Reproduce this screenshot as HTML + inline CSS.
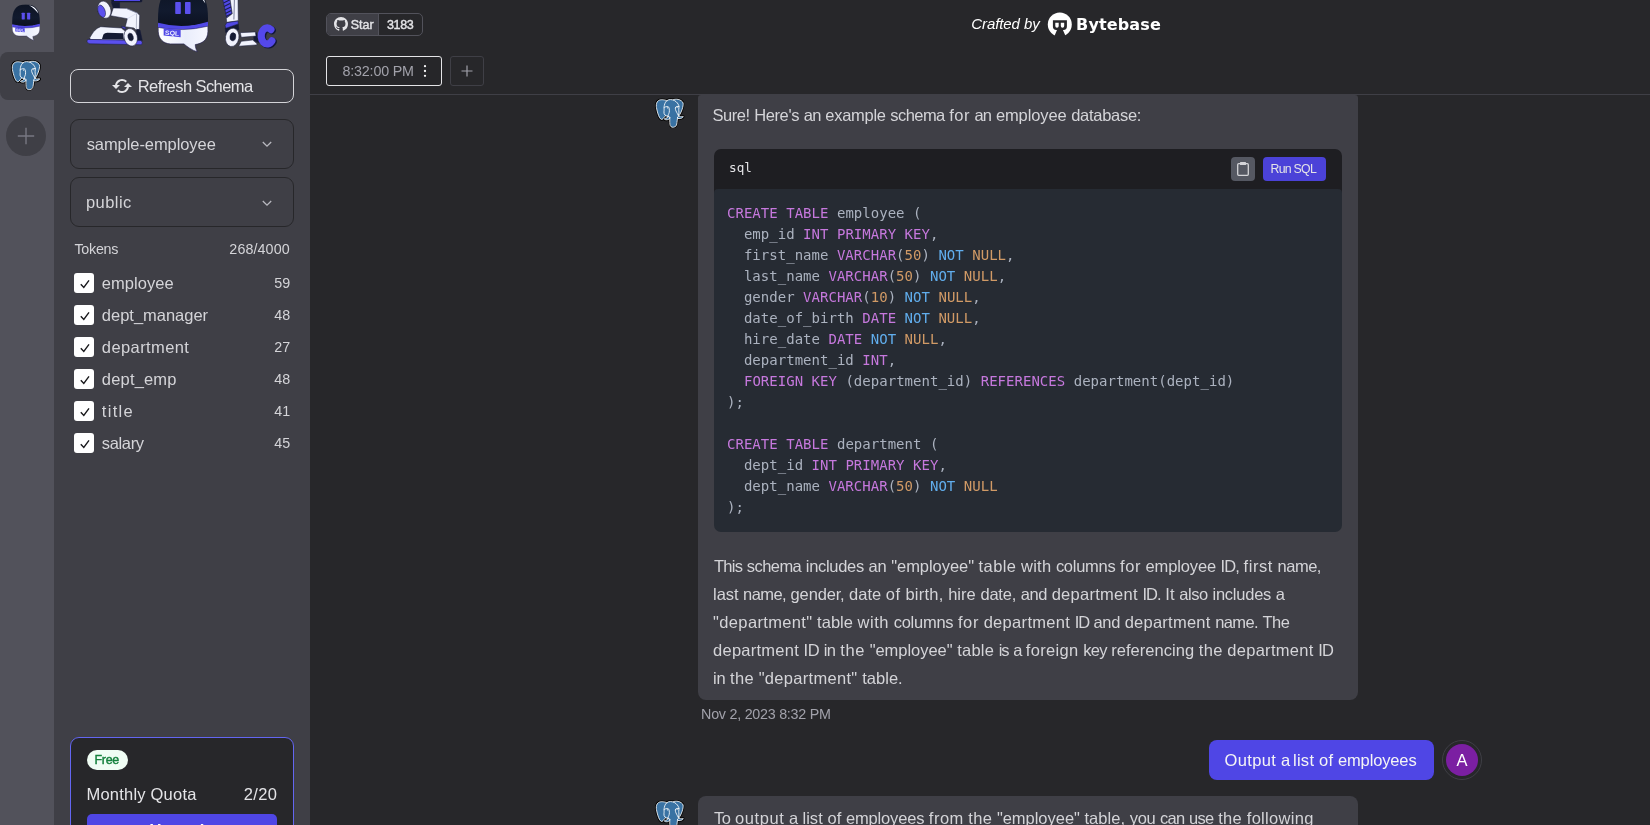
<!DOCTYPE html>
<html lang="en">
<head>
<meta charset="utf-8">
<title>SQL Chat</title>
<style>
*{box-sizing:border-box;margin:0;padding:0}
html,body{width:1650px;height:825px;overflow:hidden;background:#27272a;}
body{position:relative;font-family:"Liberation Sans",sans-serif;color:#d4d4d8;font-size:16px;}
#root{position:absolute;left:0;top:0;width:1650px;height:825px;will-change:transform}
.abs{position:absolute}
.t{position:absolute;white-space:nowrap;line-height:1;color:#d4d4d8}
#rail{position:absolute;left:0;top:0;width:54px;height:825px;background:#52525b}
#railsel{position:absolute;left:0;top:52px;width:54px;height:48px;background:#3f3f46;border-radius:8px 0 0 8px}
#railplus{position:absolute;left:6px;top:116px;width:40px;height:40px;border-radius:50%;background:#3f3f46}
#side{position:absolute;left:54px;top:0;width:256px;height:825px;background:#3f3f46}
#refreshb{position:absolute;left:70px;top:69px;width:224px;height:34px;border:1px solid #d4d4d8;border-radius:8px}
.sel{position:absolute;left:70px;width:224px;height:50px;border:1px solid #27272a;border-radius:9px}
.cb{position:absolute;left:74px;width:20px;height:20px;background:#fff;border-radius:3px}
#quota{position:absolute;left:70px;top:737px;width:224px;height:120px;border:1px solid #6366f1;border-radius:9px;background:#27272a}
#hline{position:absolute;left:310px;top:94px;width:1340px;height:1px;background:#3f3f46}
.bubble{position:absolute;left:698px;width:660px;background:#3f3f46}
#codeh{position:absolute;left:714px;top:149px;width:628px;height:60px;background:#1e1e22;border-radius:7px 7px 0 0}
#codeb{position:absolute;left:714px;top:189px;width:628px;height:343px;background:#262b33;border-radius:4px 4px 7px 7px}
pre{position:absolute;left:727px;top:203.2px;font-family:"DejaVu Sans Mono","Liberation Mono",monospace;font-size:14px;line-height:21px;color:#abb2bf;white-space:pre;letter-spacing:0.025px}
.k{color:#c678dd}.n{color:#d19a66}.b{color:#61aeee}
</style>
</head>
<body>
<div id="root">
<svg width="0" height="0" style="position:absolute">
<defs>
<linearGradient id="gDome" x1="0" y1="0" x2="0" y2="1"><stop offset="0" stop-color="#0d1424"/><stop offset="0.6" stop-color="#111a2e"/><stop offset="1" stop-color="#0b1120"/></linearGradient>
<linearGradient id="gBody" x1="0" y1="0" x2="1" y2="0"><stop offset="0" stop-color="#ffffff"/><stop offset="0.55" stop-color="#e9edfb"/><stop offset="1" stop-color="#f7f8ff"/></linearGradient>
<symbol id="bot" viewBox="0 0 28 36.6">
<path d="M0.2,20.5 L0.3,25 C0.5,29 3,31.6 7,31.8 L14.5,31.8 C16.5,33.5 19,35.3 21.9,36.2 C21.2,34.8 20.8,33.5 20.8,32.2 C24.5,31.5 27.6,30 27.8,25 L27.8,20.5 Z" fill="url(#gBody)" stroke="#1e1b4b" stroke-width="0.35"/>
<path d="M0.2,20.6 C-0.2,7 2.5,0.3 13.8,0.3 C25.3,0.3 28.2,7 27.8,20 Q14,24.2 0.2,20.6 Z" fill="url(#gDome)"/>
<path d="M0.2,20.1 Q14,23.9 27.8,19.5 L27.8,22 Q14,25.4 0.2,22.7 Z" fill="#5048e5"/>
<path d="M0.2,22.7 Q14,25.4 27.8,22" fill="none" stroke="#1e1b4b" stroke-width="0.3"/>
<rect x="9.7" y="8.6" width="3.1" height="6.6" rx="0.4" fill="#5b50ee"/>
<rect x="15.1" y="8.6" width="3.1" height="6.6" rx="0.4" fill="#5b50ee"/>
<path d="M3.3,23.2 L12.7,24 L12.7,28.1 L3.3,27.2 Z" fill="#5048e5"/>
<text x="3.9" y="26.7" font-family="Liberation Sans, sans-serif" font-weight="bold" font-size="3.5" fill="#e8eaff" transform="rotate(5 4 26.7)" textLength="8" lengthAdjust="spacingAndGlyphs">SQL</text>
<path d="M17,1 C21.8,1.8 25.2,5 26.4,9.4 C23.8,5.8 21,3.2 17,1 Z" fill="#f4f6ff"/>
</symbol>
<symbol id="pg" viewBox="0 0 432.071 445.383">
<g style="fill-rule:nonzero;clip-rule:nonzero;fill:none;stroke:#FFFFFF;stroke-width:12.4651;stroke-linecap:round;stroke-linejoin:round;stroke-miterlimit:4;">
<path style="fill:#000000;stroke:#000000;stroke-width:37.3953;stroke-linecap:butt;stroke-linejoin:miter;" d="M323.205,324.227c2.833-23.601,1.984-27.062,19.563-23.239l4.463,0.392c13.517,0.615,31.199-2.174,41.587-7c22.362-10.376,35.622-27.7,13.572-23.148c-50.297,10.376-53.755-6.655-53.755-6.655c53.111-78.803,75.313-178.836,56.149-203.322C352.514-5.534,262.036,26.049,260.522,26.869l-0.482,0.089c-9.938-2.062-21.06-3.294-33.554-3.496c-22.761-0.374-40.032,5.967-53.133,15.904c0,0-161.408-66.498-153.899,83.628c1.597,31.936,45.777,241.655,98.47,178.31c19.259-23.163,37.871-42.748,37.871-42.748c9.242,6.14,20.307,9.272,31.912,8.147l0.897-0.765c-0.281,2.876-0.157,5.689,0.359,9.019c-13.572,15.167-9.584,17.83-36.723,23.416c-27.457,5.659-11.326,15.734-0.797,18.367c12.768,3.193,42.305,7.716,62.268-20.224l-0.795,3.188c5.325,4.26,4.965,30.619,5.72,49.452c0.756,18.834,2.017,36.409,5.856,46.771c3.839,10.36,8.369,37.05,44.036,29.406c29.809-6.388,52.6-15.582,54.677-101.107"/>
<path style="fill:#3972a3;stroke:none;" d="M402.395,271.23c-50.302,10.376-53.76-6.655-53.76-6.655c53.111-78.808,75.313-178.843,56.153-203.326c-52.27-66.785-142.752-35.2-144.262-34.38l-0.486,0.087c-9.938-2.063-21.06-3.292-33.56-3.496c-22.761-0.373-40.026,5.967-53.127,15.902c0,0-161.411-66.495-153.904,83.63c1.597,31.938,45.776,241.657,98.471,178.312c19.26-23.163,37.869-42.748,37.869-42.748c9.243,6.14,20.308,9.272,31.908,8.147l0.901-0.765c-0.28,2.876-0.152,5.689,0.361,9.019c-13.575,15.167-9.586,17.83-36.723,23.416c-27.459,5.659-11.328,15.734-0.796,18.367c12.768,3.193,42.307,7.716,62.266-20.224l-0.796,3.188c5.319,4.26,9.054,27.711,8.428,48.969c-0.626,21.259-1.044,35.854,3.147,47.254c4.191,11.4,8.368,37.05,44.042,29.406c29.809-6.388,45.256-22.942,47.405-50.555c1.525-19.631,4.976-16.729,5.194-34.28l2.768-8.309c3.192-26.611,0.507-35.196,18.872-31.203l4.463,0.392c13.517,0.615,31.208-2.174,41.591-7c22.358-10.376,35.618-27.7,13.573-23.148z"/>
<path d="M215.866,286.484c-1.385,49.516,0.348,99.377,5.193,111.495c4.848,12.118,15.223,35.688,50.9,28.045c29.806-6.39,40.651-18.756,45.357-46.051c3.466-20.082,10.148-75.854,11.005-87.281"/>
<path d="M173.104,38.256c0,0-161.521-66.016-154.012,84.109c1.597,31.938,45.779,241.664,98.473,178.316c19.256-23.166,36.671-41.335,36.671-41.335"/>
<path d="M260.349,26.207c-5.591,1.753,89.848-34.889,144.087,34.417c19.159,24.484-3.043,124.519-56.153,203.329"/>
<path style="stroke-linejoin:bevel;" d="M348.282,263.953c0,0,3.461,17.036,53.764,6.653c22.04-4.552,8.776,12.774-13.577,23.155c-18.345,8.514-59.474,10.696-60.146-1.069c-1.729-30.355,21.647-21.133,19.96-28.739c-1.525-6.85-11.979-13.573-18.894-30.338c-6.037-14.633-82.796-126.849,21.287-110.183c3.813-0.789-27.146-99.002-124.553-100.599c-97.385-1.597-94.19,119.762-94.19,119.762"/>
<path d="M188.604,274.334c-13.577,15.166-9.584,17.829-36.723,23.417c-27.459,5.66-11.326,15.733-0.797,18.365c12.768,3.195,42.307,7.718,62.266-20.229c6.078-8.509-0.036-22.086-8.385-25.547c-4.034-1.671-9.428-3.765-16.361,3.994z"/>
<path d="M187.715,274.069c-1.368-8.917,2.93-19.528,7.536-31.942c6.922-18.626,22.893-37.255,10.117-96.339c-9.523-44.029-73.396-9.163-73.436-3.193c-0.039,5.968,2.889,30.26-1.067,58.548c-5.162,36.913,23.488,68.132,56.479,64.938"/>
<path style="fill:#FFFFFF;stroke-width:4.155;stroke-linecap:butt;stroke-linejoin:miter;" d="M172.517,141.7c-0.288,2.039,3.733,7.48,8.976,8.207c5.234,0.73,9.714-3.522,9.998-5.559c0.284-2.039-3.732-4.285-8.977-5.015c-5.237-0.731-9.719,0.333-9.996,2.367z"/>
<path style="fill:#FFFFFF;stroke-width:2.0775;stroke-linecap:butt;stroke-linejoin:miter;" d="M331.941,137.543c0.284,2.039-3.732,7.48-8.976,8.207c-5.238,0.73-9.718-3.522-10.005-5.559c-0.277-2.039,3.74-4.285,8.979-5.015c5.239-0.73,9.718,0.333,10.002,2.368z"/>
<path d="M350.676,123.432c0.863,15.994-3.445,26.888-3.988,43.914c-0.804,24.748,11.799,53.074-7.191,81.435"/>
</g>
</symbol>
</defs>
</svg>

<div id="rail"></div><div id="railsel"></div><div id="railplus"></div>
<svg class="abs" style="left:12px;top:4px" width="28" height="37" viewBox="0 0 28 36.6"><use href="#bot" x="0" y="0" width="28" height="36.6"/></svg>
<svg class="abs" style="left:11px;top:60px" width="30" height="31"><use href="#pg" width="30" height="31"/></svg>
<svg class="abs" style="left:17px;top:127px" width="18" height="18" viewBox="0 0 18 18"><path d="M9 0.8v16.4M0.8 9h16.4" stroke="#787882" stroke-width="1.4" fill="none"/></svg>
<div id="side"></div>
<svg class="abs" style="left:54px;top:0" width="256" height="58" viewBox="54 0 256 58">
<g stroke="#171a3a" stroke-width="0.5" stroke-linejoin="round">
<!-- S robot leg -->
<rect x="111.5" y="-3" width="30.5" height="5" rx="1" fill="#141a33"/>
<path d="M114,-1 h26 v2 h-26z" fill="#5048e5" stroke="none"/>
<polygon points="111.3,2.2 119.6,2.2 119.6,9 113.3,8" fill="#141a33"/>
<polygon points="113.3,8 126,8.3 137.3,13 139.7,15.3 139.3,29.3 136,30 134,28 125.3,26.7 127.3,18.7 110.7,15.7" fill="#f1f3fd"/>
<path d="M126,8.3 L137.3,13 L127.3,18.7" fill="none" stroke="#b9bfe0" stroke-width="0.4"/>
<path d="M136.6,14 L136.3,29.5" fill="none" stroke="#59607f" stroke-width="0.4"/>
<ellipse cx="104.3" cy="9.7" rx="6.4" ry="8.8" transform="rotate(-20 104.3 9.7)" fill="#f1f3fd"/>
<ellipse cx="101.6" cy="11.2" rx="3.5" ry="6.4" transform="rotate(-20 101.6 11.2)" fill="#5b50ee"/>
<polygon points="121.3,26.3 125.3,27.3 126,29.3 122.7,28.3" fill="#5048e5"/>
<polygon points="136.7,29.3 140,30 142.3,40.5 136.7,40.5" fill="#141a33"/>
<path d="M90,37.3 L93.3,32 Q97,27.5 100.7,26.7 L121.3,28 L125.3,31.3 L123.3,40 L90,39.6 Z" fill="#f1f3fd"/>
<path d="M102,39 L103.3,34.7 Q104.5,32.8 107.3,32.7 L123.3,33.3 L123.3,39.6 Z" fill="#141a33" stroke="none"/>
<path d="M87.6,39.4 L141,40.4 Q143.2,42.5 141.5,44.7 L89,43.8 Q85.8,41.6 87.6,39.4 Z" fill="#5b50ee"/>
<ellipse cx="130.7" cy="37.3" rx="6.6" ry="8.9" transform="rotate(-15 130.7 37.3)" fill="#f1f3fd"/>
<ellipse cx="130.6" cy="37" rx="2.6" ry="3.9" transform="rotate(-15 130.6 37)" fill="#141a33"/>
<!-- arm -->
<polygon points="222.7,-1 230,-1 232,13.3 226.7,17.7" fill="#5048e5"/>
<path d="M223.5,3 l6,-3 M224,6.5 l6.5,-3.2 M224.6,10 l6.8,-3.3 M225.3,13.5 l6.5,-3.2 M226,16.5 l5,-2.6" stroke="#1a1f4d" stroke-width="1.1" fill="none"/>
<polygon points="230,-1 238,-1 238.3,20.7 226.7,22.3 226.3,18.3 232.3,13.7" fill="#f1f3fd"/>
<path d="M234.4,0 L233.9,19.5" fill="none" stroke="#2a2f55" stroke-width="0.6"/>
<polygon points="225.2,28 238.3,24 239,29.5 225.7,32.5" fill="#141a33"/>
<polygon points="225,25.7 226.7,22.7 238,21 238.3,23.9 226,28.2" fill="#5048e5"/>
<polygon points="253.3,33.3 256.7,32.7 258.7,42.7 254,40.5" fill="#141a33"/>
<polygon points="240.3,32.7 255.3,31.9 256,36 241.3,37.3" fill="#f1f3fd"/>
<polygon points="241.3,41.3 252.7,40 257,43.7 256.7,44.9 238.7,46.2" fill="#f1f3fd"/>
<ellipse cx="232.2" cy="37.4" rx="6.7" ry="9.2" transform="rotate(10 232.2 37.4)" fill="#f1f3fd"/>
<ellipse cx="232.9" cy="36.8" rx="2.9" ry="4" transform="rotate(10 232.9 36.8)" fill="#141a33"/>
</g>
<path d="M270.9,29.6 A6,8 0 1 0 271.9,40.9" fill="none" stroke="#12173a" stroke-width="7.6" stroke-linecap="round" transform="translate(1.1,0.9)"/>
<path d="M270.9,29.6 A6,8 0 1 0 271.9,40.9" fill="none" stroke="#5448ea" stroke-width="7.2" stroke-linecap="round"/>
<use href="#bot" x="157.7" y="-13.6" width="50.6" height="66.2"/>
</svg>

<div id="refreshb"></div>
<svg class="abs" style="left:110px;top:74.3px" width="24" height="24" viewBox="0 0 24 24"><path fill="#e4e4e7" d="M10 11H7.101l.001-.009a4.956 4.956 0 0 1 .752-1.787 5.054 5.054 0 0 1 2.2-1.811c.302-.128.617-.226.938-.291a5.078 5.078 0 0 1 2.018 0 4.978 4.978 0 0 1 2.525 1.361l1.416-1.412a7.036 7.036 0 0 0-2.224-1.501 6.921 6.921 0 0 0-1.315-.408 7.079 7.079 0 0 0-2.819 0 6.94 6.94 0 0 0-1.316.409 7.04 7.04 0 0 0-3.08 2.534 6.978 6.978 0 0 0-1.054 2.505c-.028.135-.043.273-.063.41H2l4 4 4-4zm4 2h2.899l-.001.008a4.976 4.976 0 0 1-2.103 3.138 4.943 4.943 0 0 1-1.787.752 5.073 5.073 0 0 1-2.017 0 4.956 4.956 0 0 1-1.787-.752 5.072 5.072 0 0 1-.74-.61L7.05 16.95a7.032 7.032 0 0 0 2.225 1.5c.424.18.867.317 1.315.408a7.07 7.07 0 0 0 2.818 0 7.031 7.031 0 0 0 4.395-2.945 6.974 6.974 0 0 0 1.053-2.503c.027-.135.043-.273.063-.41H22l-4-4-4 4z"/></svg>
<div class="sel" style="top:119px"></div><div class="sel" style="top:177px"></div>
<svg class="abs" style="left:262px;top:141px" width="10" height="7" viewBox="0 0 10 7"><path d="M0.8 1l4.2 4.2 4.2-4.2" fill="none" stroke="#b9b9c0" stroke-width="1.3"/></svg>
<svg class="abs" style="left:262px;top:199.5px" width="10" height="7" viewBox="0 0 10 7"><path d="M0.8 1l4.2 4.2 4.2-4.2" fill="none" stroke="#b9b9c0" stroke-width="1.3"/></svg>
<div class="cb" style="top:273px"></div>
<svg class="abs" style="left:79px;top:279px" width="12" height="10" viewBox="0 0 12 10"><path d="M1.8 5.2l3 3.2 5.2-7" fill="none" stroke="#18181b" stroke-width="1.4"/></svg>
<div class="cb" style="top:305px"></div>
<svg class="abs" style="left:79px;top:311px" width="12" height="10" viewBox="0 0 12 10"><path d="M1.8 5.2l3 3.2 5.2-7" fill="none" stroke="#18181b" stroke-width="1.4"/></svg>
<div class="cb" style="top:337px"></div>
<svg class="abs" style="left:79px;top:343px" width="12" height="10" viewBox="0 0 12 10"><path d="M1.8 5.2l3 3.2 5.2-7" fill="none" stroke="#18181b" stroke-width="1.4"/></svg>
<div class="cb" style="top:369px"></div>
<svg class="abs" style="left:79px;top:375px" width="12" height="10" viewBox="0 0 12 10"><path d="M1.8 5.2l3 3.2 5.2-7" fill="none" stroke="#18181b" stroke-width="1.4"/></svg>
<div class="cb" style="top:401px"></div>
<svg class="abs" style="left:79px;top:407px" width="12" height="10" viewBox="0 0 12 10"><path d="M1.8 5.2l3 3.2 5.2-7" fill="none" stroke="#18181b" stroke-width="1.4"/></svg>
<div class="cb" style="top:433px"></div>
<svg class="abs" style="left:79px;top:439px" width="12" height="10" viewBox="0 0 12 10"><path d="M1.8 5.2l3 3.2 5.2-7" fill="none" stroke="#18181b" stroke-width="1.4"/></svg>
<div id="quota"></div>
<div class="abs" style="left:87px;top:750px;width:41px;height:20px;border-radius:10px;background:#f0fdf4"></div>
<div class="abs" style="left:87px;top:814px;width:190px;height:36px;border-radius:5px;background:#4f46e5"></div>
<div class="abs" style="left:326px;top:13px;width:97px;height:23px;border:1px solid #52525b;border-radius:5px;background:#27272a;overflow:hidden"><div style="position:absolute;left:0;top:0;width:52px;height:21px;background:#3f3f46;border-right:1px solid #52525b"></div></div>
<svg class="abs" style="left:334px;top:17px" width="14" height="14" viewBox="0 0 16 16"><path fill="#e4e4e7" d="M8 0C3.58 0 0 3.58 0 8c0 3.54 2.29 6.53 5.47 7.59.4.07.55-.17.55-.38 0-.19-.01-.82-.01-1.49-2.01.37-2.53-.49-2.69-.94-.09-.23-.48-.94-.82-1.13-.28-.15-.68-.52-.01-.53.63-.01 1.08.58 1.23.82.72 1.21 1.87.87 2.33.66.07-.52.28-.87.51-1.07-1.78-.2-3.64-.89-3.64-3.95 0-.87.31-1.59.82-2.15-.08-.2-.36-1.02.08-2.12 0 0 .67-.21 2.2.82.64-.18 1.32-.27 2-.27.68 0 1.36.09 2 .27 1.53-1.04 2.2-.82 2.2-.82.44 1.1.16 1.92.08 2.12.51.56.82 1.27.82 2.15 0 3.07-1.87 3.75-3.65 3.95.29.25.54.73.54 1.48 0 1.07-.01 1.93-.01 2.2 0 .21.15.46.55.38A8.013 8.013 0 0016 8c0-4.42-3.58-8-8-8z"/></svg>
<svg class="abs" style="left:1047px;top:11.5px" width="26" height="26" viewBox="1047 11 26 26"><circle cx="1059.8" cy="23.4" r="12" fill="#fff"/><path d="M1052.9,19.3 h14 v6.2 q0,3.4 -3.4,3.4 h-7.2 q-3.4,0 -3.4,-3.4 z M1057.2,28.4 L1062.7,28.4 L1066.2,36.6 L1053.8,36.6 Z" fill="#27272a"/><path d="M1055.3,21.8 h3.4 v3.2 q0,1.7 -1.7,1.7 q-1.7,0 -1.7,-1.7 z M1060.8,21.8 h3.4 v3.2 q0,1.7 -1.7,1.7 q-1.7,0 -1.7,-1.7 z" fill="#fff"/></svg>
<div class="abs" style="left:326px;top:56px;width:116px;height:30px;border:1px solid #e4e4e7;border-radius:3px;background:#262629"></div>
<svg class="abs" style="left:422px;top:64px" width="6" height="14" viewBox="0 0 6 14"><circle cx="3" cy="2.2" r="1.15" fill="#f4f4f5"/><circle cx="3" cy="7" r="1.15" fill="#f4f4f5"/><circle cx="3" cy="11.8" r="1.15" fill="#f4f4f5"/></svg>
<div class="abs" style="left:450px;top:56px;width:34px;height:30px;border:1px solid #3f3f46;border-radius:3px"></div>
<svg class="abs" style="left:461px;top:65px" width="12" height="12" viewBox="0 0 12 12"><path d="M6 0.5v11M0.5 6h11" stroke="#a1a1aa" stroke-width="1.2" fill="none"/></svg>

<div id="hline"></div>
<div class="bubble" style="top:95px;height:605px;border-radius:3px 3px 8px 8px"></div>
<div id="codeh"></div><div id="codeb"></div>
<svg class="abs" style="left:655.4px;top:97.6px" width="29.6" height="30.5"><use href="#pg" width="29.6" height="30.5"/></svg>
<svg class="abs" style="left:655.4px;top:800.4px" width="29.6" height="30.5"><use href="#pg" width="29.6" height="30.5"/></svg>
<div class="abs" style="left:1231px;top:157px;width:24px;height:24px;border-radius:4px;background:#555862"></div>
<svg class="abs" style="left:1236px;top:161px" width="14" height="16" viewBox="0 0 14 16"><rect x="1.7" y="2.7" width="10.6" height="11.6" rx="1" fill="none" stroke="#d4d4d8" stroke-width="1.3"/><rect x="4" y="1" width="6" height="3" rx="0.6" fill="#d4d4d8"/></svg>
<div class="abs" style="left:1263px;top:157px;width:63px;height:24px;border-radius:4px;background:#4b42d8"></div>

<pre><span class="k">CREATE</span> <span class="k">TABLE</span> employee (
  emp_id <span class="k">INT</span> <span class="k">PRIMARY</span> <span class="k">KEY</span>,
  first_name <span class="k">VARCHAR</span>(<span class="n">50</span>) <span class="b">NOT</span> <span class="n">NULL</span>,
  last_name <span class="k">VARCHAR</span>(<span class="n">50</span>) <span class="b">NOT</span> <span class="n">NULL</span>,
  gender <span class="k">VARCHAR</span>(<span class="n">10</span>) <span class="b">NOT</span> <span class="n">NULL</span>,
  date_of_birth <span class="k">DATE</span> <span class="b">NOT</span> <span class="n">NULL</span>,
  hire_date <span class="k">DATE</span> <span class="b">NOT</span> <span class="n">NULL</span>,
  department_id <span class="k">INT</span>,
  <span class="k">FOREIGN</span> <span class="k">KEY</span> (department_id) <span class="k">REFERENCES</span> department(dept_id)
);

<span class="k">CREATE</span> <span class="k">TABLE</span> department (
  dept_id <span class="k">INT</span> <span class="k">PRIMARY</span> <span class="k">KEY</span>,
  dept_name <span class="k">VARCHAR</span>(<span class="n">50</span>) <span class="b">NOT</span> <span class="n">NULL</span>
);</pre>

<div class="abs" style="left:1209px;top:740px;width:225px;height:40px;border-radius:8px;background:#4f46e5"></div>
<div class="abs" style="left:1442px;top:740px;width:40px;height:40px;border-radius:50%;border:1px solid #3f3f46"></div>
<div class="abs" style="left:1446px;top:744px;width:32px;height:32px;border-radius:50%;background:#7b1fa2"></div>
<div class="bubble" style="top:796px;height:60px;border-radius:8px"></div>
<div id="refresh" class="t" style="left:137.70px;top:77.97px;font-size:16.5px;letter-spacing:-0.568px;color:#e4e4e7">Refresh Schema</div>
<div id="seldb" class="t" style="left:86.68px;top:135.57px;font-size:16.5px;letter-spacing:-0.077px;">sample-employee</div>
<div id="selsc" class="t" style="left:86.02px;top:193.88px;font-size:16.5px;letter-spacing:0.432px;">public</div>
<div id="tok" class="t" style="left:74.50px;top:241.84px;font-size:14.3px;letter-spacing:-0.288px;">Tokens</div>
<div id="tokn" class="t" style="left:229.34px;top:241.84px;font-size:14.3px;letter-spacing:0.103px;">268/4000</div>
<div id="r1" class="t" style="left:101.84px;top:274.98px;font-size:16.5px;letter-spacing:0.051px;">employee</div>
<div id="r2" class="t" style="left:101.84px;top:306.98px;font-size:16.5px;letter-spacing:-0.016px;">dept_manager</div>
<div id="r3" class="t" style="left:101.84px;top:338.98px;font-size:16.5px;letter-spacing:0.400px;">department</div>
<div id="r4" class="t" style="left:101.84px;top:370.98px;font-size:16.5px;letter-spacing:0.180px;">dept_emp</div>
<div id="r5" class="t" style="left:101.84px;top:402.98px;font-size:16.5px;letter-spacing:1.305px;">title</div>
<div id="r6" class="t" style="left:101.84px;top:434.98px;font-size:16.5px;letter-spacing:-0.360px;">salary</div>
<div id="n1" class="t" style="left:274.26px;top:275.64px;font-size:14.3px;letter-spacing:0.000px;">59</div>
<div id="n2" class="t" style="left:274.26px;top:307.64px;font-size:14.3px;letter-spacing:-0.000px;">48</div>
<div id="n3" class="t" style="left:274.26px;top:339.64px;font-size:14.3px;letter-spacing:0.000px;">27</div>
<div id="n4" class="t" style="left:274.26px;top:371.64px;font-size:14.3px;letter-spacing:-0.000px;">48</div>
<div id="n5" class="t" style="left:274.26px;top:403.64px;font-size:14.3px;letter-spacing:-0.000px;">41</div>
<div id="n6" class="t" style="left:274.26px;top:435.64px;font-size:14.3px;letter-spacing:-0.000px;">45</div>
<div id="free" class="t" style="left:94.60px;top:753.67px;font-size:12.5px;letter-spacing:-0.360px;-webkit-text-stroke:0.4px #15803d;color:#15803d">Free</div>
<div id="mq" class="t" style="left:86.54px;top:785.98px;font-size:16.5px;letter-spacing:0.210px;color:#e4e4e7">Monthly Quota</div>
<div id="mqn" class="t" style="left:243.68px;top:785.98px;font-size:16.5px;letter-spacing:0.420px;color:#e4e4e7">2/20</div>
<div id="upg" class="t" style="left:149.40px;top:821.77px;font-size:16.5px;letter-spacing:-0.550px;font-weight:bold;color:#fff">Upgrade</div>
<div id="star" class="t" style="left:350.84px;top:19.27px;font-size:12.5px;letter-spacing:-0.060px;-webkit-text-stroke:0.4px #e4e4e7;color:#e4e4e7">Star</div>
<div id="starn" class="t" style="left:387.00px;top:19.27px;font-size:12.5px;letter-spacing:-0.360px;-webkit-text-stroke:0.4px #e4e4e7;color:#e4e4e7">3183</div>
<div id="craft" class="t" style="left:971.34px;top:15.95px;font-size:15px;letter-spacing:-0.100px;font-style:italic;color:#fff">Crafted by</div>
<div id="byte" class="t" style="left:1076.10px;top:17.00px;font-size:16px;letter-spacing:0.129px;font-weight:bold;color:#fff;font-family:'DejaVu Sans',sans-serif">Bytebase</div>
<div id="tab" class="t" style="left:342.60px;top:63.75px;font-size:14.3px;letter-spacing:-0.200px;color:#a1a1aa">8:32:00 PM</div>
<div id="m1" class="t" style="left:712.52px;top:106.77px;font-size:16.5px;"><span style="letter-spacing:-0.485px">Sure!</span> <span style="letter-spacing:-0.376px">Here's</span> <span style="letter-spacing:-0.673px">an</span> <span style="letter-spacing:-0.266px">example</span> <span style="letter-spacing:-0.578px">schema</span> <span style="letter-spacing:0.449px">for</span> <span style="letter-spacing:-0.773px">an</span> <span style="letter-spacing:-0.104px">employee</span> <span style="letter-spacing:-0.287px">database:</span></div>
<div id="sql" class="t" style="left:729.10px;top:161.99px;font-size:12.6px;letter-spacing:0.000px;font-family:'DejaVu Sans Mono','Liberation Mono',monospace;color:#e4e4e7">sql</div>
<div id="run" class="t" style="left:1270.52px;top:162.94px;font-size:12.3px;letter-spacing:-0.720px;color:#e4e4e7">Run SQL</div>
<div id="p1" class="t" style="left:714.00px;top:557.58px;font-size:16.5px;"><span style="letter-spacing:-0.740px">This</span> <span style="letter-spacing:-0.561px">schema</span> <span style="letter-spacing:-0.304px">includes</span> <span style="letter-spacing:-0.123px">an</span> <span style="letter-spacing:-0.055px">"employee"</span> <span style="letter-spacing:0.426px">table</span> <span style="letter-spacing:0.217px">with</span> <span style="letter-spacing:-0.263px">columns</span> <span style="letter-spacing:0.549px">for</span> <span style="letter-spacing:-0.142px">employee</span> <span style="letter-spacing:-0.894px">ID,</span> <span style="letter-spacing:0.564px">first</span> <span style="letter-spacing:-0.512px">name,</span></div>
<div id="p2" class="t" style="left:713.10px;top:585.58px;font-size:16.5px;"><span style="letter-spacing:-0.069px">last</span> <span style="letter-spacing:-0.589px">name,</span> <span style="letter-spacing:-0.164px">gender,</span> <span style="letter-spacing:-0.003px">date</span> <span style="letter-spacing:0.624px">of</span> <span style="letter-spacing:0.238px">birth,</span> <span style="letter-spacing:0.049px">hire</span> <span style="letter-spacing:-0.218px">date,</span> <span style="letter-spacing:-0.373px">and</span> <span style="letter-spacing:0.274px">department</span> <span style="letter-spacing:-0.994px">ID.</span> <span style="letter-spacing:0.121px">It</span> <span style="letter-spacing:-0.392px">also</span> <span style="letter-spacing:-0.242px">includes</span> <span style="letter-spacing:-1.388px">a</span></div>
<div id="p3" class="t" style="left:713.10px;top:613.58px;font-size:16.5px;"><span style="letter-spacing:0.352px">"department"</span> <span style="letter-spacing:0.026px">table</span> <span style="letter-spacing:0.517px">with</span> <span style="letter-spacing:-0.249px">columns</span> <span style="letter-spacing:0.616px">for</span> <span style="letter-spacing:0.314px">department</span> <span style="letter-spacing:-1.244px">ID</span> <span style="letter-spacing:-0.306px">and</span> <span style="letter-spacing:0.244px">department</span> <span style="letter-spacing:-0.629px">name.</span> <span style="letter-spacing:-0.546px">The</span></div>
<div id="p4" class="t" style="left:713.10px;top:641.58px;font-size:16.5px;"><span style="letter-spacing:0.244px">department</span> <span style="letter-spacing:-0.544px">ID</span> <span style="letter-spacing:-0.465px">in</span> <span style="letter-spacing:0.658px">the</span> <span style="letter-spacing:-0.035px">"employee"</span> <span style="letter-spacing:0.226px">table</span> <span style="letter-spacing:-1.004px">is</span> <span style="letter-spacing:-1.275px">a</span> <span style="letter-spacing:0.351px">foreign</span> <span style="letter-spacing:-0.758px">key</span> <span style="letter-spacing:0.032px">referencing</span> <span style="letter-spacing:0.325px">the</span> <span style="letter-spacing:0.294px">department</span> <span style="letter-spacing:-0.850px">ID</span></div>
<div id="p5" class="t" style="left:713.10px;top:669.58px;font-size:16.5px;"><span style="letter-spacing:-0.215px">in</span> <span style="letter-spacing:0.325px">the</span> <span style="letter-spacing:0.310px">"department"</span> <span style="letter-spacing:0.038px">table.</span></div>
<div id="ts" class="t" style="left:701.10px;top:706.85px;font-size:14.3px;letter-spacing:-0.250px;color:#a1a1aa">Nov 2, 2023 8:32 PM</div>
<div id="u1" class="t" style="left:1224.52px;top:751.58px;font-size:16.5px;color:#f4f4f5"><span style="letter-spacing:0.378px">Output</span> <span style="letter-spacing:-1.775px">a</span> <span style="letter-spacing:0.310px">list</span> <span style="letter-spacing:0.324px">of</span> <span style="letter-spacing:-0.133px">employees</span></div>
<div id="av" class="t" style="left:1456.42px;top:751.58px;font-size:16.5px;letter-spacing:0.000px;color:#fff">A</div>
<div id="m2" class="t" style="left:714.00px;top:809.58px;font-size:16.5px;"><span style="letter-spacing:-0.512px">To</span> <span style="letter-spacing:0.590px">output</span> <span style="letter-spacing:-0.375px">a</span> <span style="letter-spacing:0.060px">list</span> <span style="letter-spacing:0.124px">of</span> <span style="letter-spacing:-0.176px">employees</span> <span style="letter-spacing:0.478px">from</span> <span style="letter-spacing:0.325px">the</span> <span style="letter-spacing:-0.025px">"employee"</span> <span style="letter-spacing:0.040px">table,</span> <span style="letter-spacing:-0.265px">you</span> <span style="letter-spacing:-0.732px">can</span> <span style="letter-spacing:-0.732px">use</span> <span style="letter-spacing:0.358px">the</span> <span style="letter-spacing:0.309px">following</span></div>
</div>
</body>
</html>
